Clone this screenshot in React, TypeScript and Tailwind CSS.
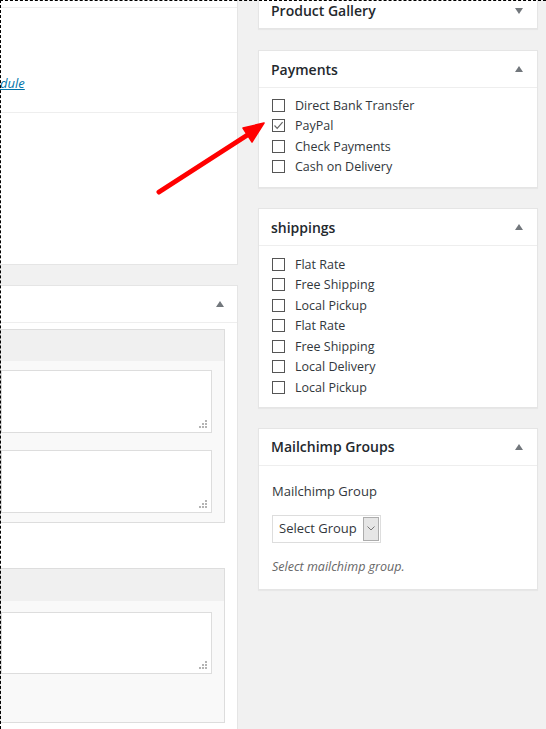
const Triangle = ({ down = false }: { down?: boolean }) => (
  <svg width="8" height="6" viewBox="0 0 8 6" className="block">
    {down ? (
      <polygon points="0,0 8,0 4,6" fill="#72777c" />
    ) : (
      <polygon points="0,6 8,6 4,0" fill="#72777c" />
    )}
  </svg>
);

const Checkbox = ({ checked = false }: { checked?: boolean }) => (
  <span className="flex h-[13px] w-[13px] shrink-0 items-center justify-center border border-[#555] bg-white">
    {checked && (
      <svg width="11" height="11" viewBox="0 0 11 11">
        <polyline points="1.5,5.5 4.2,8.3 9.6,2.2" fill="none" stroke="#666" strokeWidth="1.2" />
      </svg>
    )}
  </span>
);

const Grip = () => (
  <svg width="8" height="8" viewBox="0 0 8 8" className="absolute bottom-[4px] right-[4px]">
    <rect x="6" y="0" width="2" height="2" fill="#b4b4b4" />
    <rect x="3" y="3" width="2" height="2" fill="#b4b4b4" />
    <rect x="6" y="3" width="2" height="2" fill="#b4b4b4" />
    <rect x="0" y="6" width="2" height="2" fill="#b4b4b4" />
    <rect x="3" y="6" width="2" height="2" fill="#b4b4b4" />
    <rect x="6" y="6" width="2" height="2" fill="#b4b4b4" />
  </svg>
);

const Textarea = ({ h }: { h: string }) => (
  <div className={`relative w-full border border-[#ddd] bg-white ${h}`}>
    <Grip />
  </div>
);

const PanelHeader = ({ title, down = false }: { title: string; down?: boolean }) => (
  <div className="flex h-[37px] items-center justify-between border-b border-[#eee] pl-3 pr-[14px]">
    <h2 className="text-[14px] font-semibold text-[#23282d]">{title}</h2>
    <Triangle down={down} />
  </div>
);

const payments = [
  { label: "Direct Bank Transfer", checked: false },
  { label: "PayPal", checked: true },
  { label: "Check Payments", checked: false },
  { label: "Cash on Delivery", checked: false },
];

const shippings = [
  "Flat Rate",
  "Free Shipping",
  "Local Pickup",
  "Flat Rate",
  "Free Shipping",
  "Local Delivery",
  "Local Pickup",
];

const CheckRow = ({ label, checked }: { label: string; checked?: boolean }) => (
  <label className="flex h-[20.5px] items-center gap-[10px] text-[12.5px] text-[#32373c]">
    <Checkbox checked={checked} />
    <span className="translate-y-[1px]">{label}</span>
  </label>
);

export default function App() {
  return (
    <div className="relative h-[729px] w-[546px] overflow-hidden bg-[#f1f1f1] font-['Open_Sans',sans-serif] text-[13px] text-[#444]">
      <div className="flex">
        {/* left column */}
        <div className="w-[238px] shrink-0 overflow-hidden">
          <div className="h-[265px] border-r border-b border-[#e5e5e5] bg-white">
            <div className="h-[8px] border-b border-[#eee]" />
            <div className="h-[105px] border-b border-[#eee] pt-[66px]">
              <a className="block whitespace-nowrap text-[13px] italic leading-[18px] text-[#0073aa] underline">
                dule
              </a>
            </div>
          </div>

          <div className="mt-[20px] h-[460px] border-t border-r border-[#e5e5e5] bg-white">
            <div className="flex h-[37px] items-center justify-end border-b border-[#eee] pr-[13px]">
              <Triangle />
            </div>
            <div className="pt-[6px] pr-3">
              <div className="border border-[#ddd]">
                <div className="h-[31px] bg-[#f0f0f0]" />
                <div className="bg-[#f9f9f9] pt-[9px] pr-3 pb-[9px]">
                  <Textarea h="h-[63px]" />
                  <div className="mt-[17px]">
                    <Textarea h="h-[63px]" />
                  </div>
                </div>
              </div>

              <div className="mt-[45px] border border-[#ddd]">
                <div className="h-[32px] bg-[#f0f0f0]" />
                <div className="bg-[#f9f9f9] pt-[11px] pr-3 pb-[48px]">
                  <Textarea h="h-[62px]" />
                </div>
              </div>
            </div>
          </div>
        </div>

        {/* right column */}
        <div className="-mt-[8px] ml-[20px] w-[280px] shrink-0">
          <div className="border border-[#e5e5e5] bg-white shadow-[0_1px_1px_rgba(0,0,0,0.04)]">
            <div className="flex h-[35px] items-center justify-between pl-3 pr-[14px]">
              <h2 className="text-[14px] font-semibold text-[#23282d]">Product Gallery</h2>
              <Triangle down />
            </div>
          </div>

          <div className="mt-[21px] border border-[#e5e5e5] bg-white shadow-[0_1px_1px_rgba(0,0,0,0.04)]">
            <PanelHeader title="Payments" />
            <div className="pt-[7px] pb-[10px] pl-[13px]">
              {payments.map((p) => (
                <CheckRow key={p.label} label={p.label} checked={p.checked} />
              ))}
            </div>
          </div>

          <div className="mt-[20px] border border-[#e5e5e5] bg-white shadow-[0_1px_1px_rgba(0,0,0,0.04)]">
            <PanelHeader title="shippings" />
            <div className="pt-[8px] pb-[9px] pl-[13px]">
              {shippings.map((s, i) => (
                <CheckRow key={i} label={s} />
              ))}
            </div>
          </div>

          <div className="mt-[20px] border border-[#e5e5e5] bg-white shadow-[0_1px_1px_rgba(0,0,0,0.04)]">
            <PanelHeader title="Mailchimp Groups" />
            <div className="pt-[15px] pb-[13px] pl-[13px]">
              <p className="text-[13px] leading-[20px] text-[#32373c]">Mailchimp Group</p>
              <div className="mt-[14px] flex h-[28px] w-[109px] items-center justify-between border border-[#ddd] bg-white pl-[6px] pr-[1px]">
                <span className="whitespace-nowrap text-[13px] text-[#32373c]">Select Group</span>
                <span className="flex h-[24px] w-[16px] shrink-0 items-center justify-center border border-[#adadad] bg-[#e6e6e6]">
                  <svg width="8" height="5" viewBox="0 0 8 5">
                    <polyline points="0.5,0.5 4,4 7.5,0.5" fill="none" stroke="#777" strokeWidth="1" />
                  </svg>
                </span>
              </div>
              <p className="mt-[15px] text-[12.5px] italic leading-[18px] text-[#666]">
                Select mailchimp group.
              </p>
            </div>
          </div>
        </div>
      </div>

      {/* red arrow annotation */}
      <svg className="pointer-events-none absolute left-0 top-0" width="546" height="729">
        <line x1="159" y1="192" x2="249" y2="134" stroke="#ff0000" strokeWidth="5" strokeLinecap="round" />
        <polygon points="264,123 243,128 252,142" fill="#ff0000" stroke="#ff0000" strokeWidth="1.5" strokeLinejoin="round" />
      </svg>

      {/* selection outline */}
      <div className="pointer-events-none absolute inset-0 border-t border-l border-dashed border-black" />
    </div>
  );
}
